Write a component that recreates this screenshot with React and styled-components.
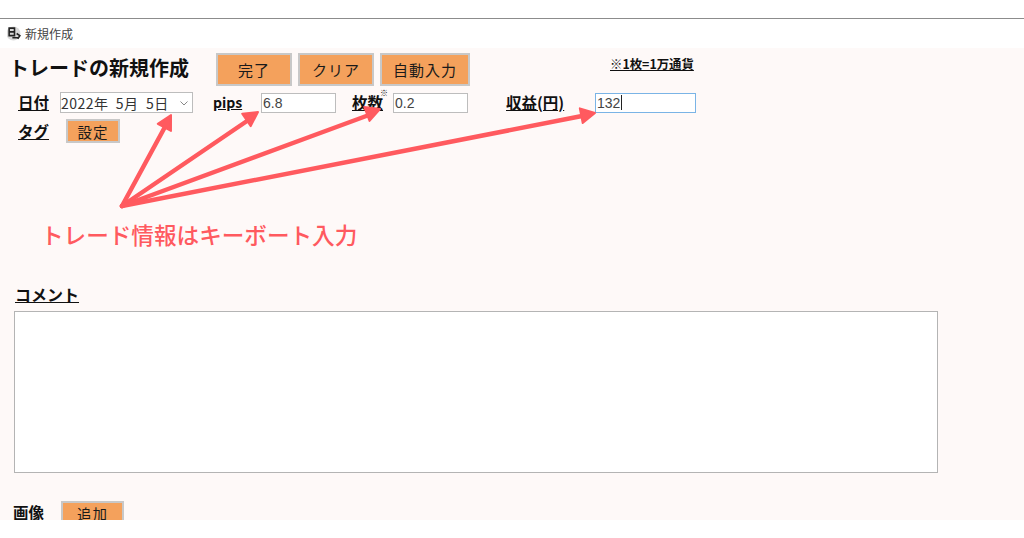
import React from "react";
import styled, { createGlobalStyle } from "styled-components";

const Global = createGlobalStyle`
  html, body { margin: 0; padding: 0; background: #fff; }
  body { font-family: "Noto Sans CJK JP", "Noto Sans", sans-serif; color: #111; }
`;
const Page = styled.div`
  position: relative;
  width: 1024px;
  height: 538px;
  overflow: hidden;
  padding-top: 18px;
  box-sizing: border-box;
`;
const TitleBar = styled.div`
  height: 30px;
  border-top: 1px solid #8c8c8c;
  box-sizing: border-box;
  display: flex;
  align-items: center;
  gap: 3px;
  padding: 0 0 0 7px;
  font-size: 12px;
  color: #444;
`;
const Panel = styled.div`
  height: 472px;
  overflow: hidden;
  background: #fef9f8;
  box-sizing: border-box;
  padding-top: 5px;
`;
const HeaderRow = styled.div`
  display: flex;
  align-items: center;
  height: 33px;
  padding-left: 9px;
`;
const Title = styled.h1`
  margin: -4px 0 0;
  width: 207px;
  font-size: 20px;
  font-weight: 700;
  line-height: 30px;
  white-space: nowrap;
`;
const OrangeButton = styled.button`
  width: ${(p) => p.$w}px;
  height: ${(p) => p.$h || 33}px;
  margin-right: ${(p) => p.$mr || 0}px;
  flex: none;
  padding: 0;
  border: 2px solid #c8c8c8;
  background: #f4a15c;
  color: #1a1a1a;
  font: 400 ${(p) => p.$fs || 15}px "Noto Sans CJK JP", sans-serif;
  letter-spacing: 1px;
`;
const Note = styled.span`
  margin-left: 140px;
  margin-top: -12px;
  font-size: 12.400px;
  font-weight: 700;
  text-decoration: underline;
  white-space: nowrap;
`;
const FieldRow = styled.div`
  display: flex;
  align-items: center;
  height: 21px;
  margin-top: 6px;
  padding-left: 18px;
`;
const Label = styled.span`
  position: relative;
  flex: none;
  width: ${(p) => p.$w}px;
  font-size: ${(p) => p.$fs || 15.500}px;
  font-weight: 700;
  line-height: 21px;
  white-space: nowrap;
  span { text-decoration: underline; }
`;
const Tiny = styled.sup`
  position: absolute;
  left: 28px;
  top: -3px;
  font-size: 8px;
  line-height: 8px;
  font-weight: 700;
`;
const DateBox = styled.div`
  flex: none;
  width: 133px;
  height: 21px;
  margin-right: 20px;
  border: 1px solid #bdbdbd;
  box-sizing: border-box;
  background: #fff;
  display: flex;
  align-items: center;
  justify-content: space-between;
  padding: 0 3px 0 0;
  font-size: 14px;
  letter-spacing: 0.500px;
  color: #333;
  white-space: pre;
`;
const TextBox = styled.div`
  flex: none;
  width: ${(p) => p.$w}px;
  height: 20px;
  box-sizing: border-box;
  margin-right: ${(p) => p.$mr || 0}px;
  border: 1px solid ${(p) => (p.$focus ? "#7ab4e6" : "#bdbdbd")};
  background: #fff;
  padding-left: 1px;
  font: 400 14px/18px "Liberation Sans", sans-serif;
  color: #444;
  display: flex;
  align-items: center;
`;
const Caret = styled.i`
  display: inline-block;
  width: 1px;
  height: 15px;
  margin-left: 1px;
  background: #222;
`;
const TagRow = styled.div`
  display: flex;
  align-items: center;
  height: 24px;
  margin-top: 6px;
  padding-left: 18px;
`;
const Hint = styled.p`
  margin: 76px 0 0 41px;
  height: 32px;
  font-size: 22.600px;
  line-height: 32px;
  font-weight: 500;
  color: #ff5a5f;
  white-space: nowrap;
`;
const CommentLabel = styled.div`
  margin: 32px 0 0 15px;
  font-size: 16px;
  font-weight: 700;
  line-height: 23px;
  text-decoration: underline;
`;
const CommentBox = styled.div`
  width: 924px;
  height: 162px;
  box-sizing: border-box;
  margin: 5px 0 0 14px;
  border: 1px solid #b4b4b4;
  background: #fff;
`;
const ImageRow = styled.div`
  display: flex;
  align-items: flex-start;
  margin-top: 28px;
  padding-left: 13px;
`;
const ImageLabel = styled(Label)`
  margin-top: 1px;
`;
const Arrows = styled.svg`
  position: absolute;
  inset: 0;
  pointer-events: none;
`;

const targets = [
  [122, 206, 166, 125, 171, 115],
  [122, 206, 247, 121, 258, 112],
  [122, 206, 369, 115, 380, 109],
  [122, 206, 582, 116, 595, 113],
];

function Head({ x, y, fromX, fromY }) {
  const a = Math.atan2(y - fromY, x - fromX);
  const d = 14;
  const w = 7.500;
  const bx = x - d * Math.cos(a);
  const by = y - d * Math.sin(a);
  const nx = -Math.sin(a) * w;
  const ny = Math.cos(a) * w;
  return <polygon points={`${x},${y} ${bx + nx},${by + ny} ${bx - nx},${by - ny}`} fill="#ff5a5f" stroke="#ff5a5f" strokeWidth="2" strokeLinejoin="round" />;
}

export default function App() {
  return (
    <Page>
      <Global />
      <TitleBar>
        <svg width="15" height="15" viewBox="0 0 14 14">
          <circle cx="6" cy="7" r="6.500" fill="#d9d9d9" />
          <path d="M2 2h5v7H2zM2 5.500h5M5 11h6M9 7l3 2-2 3" fill="none" stroke="#222" strokeWidth="1.500" />
        </svg>
        新規作成
      </TitleBar>
      <Panel>
        <HeaderRow>
          <Title>トレードの新規作成</Title>
          <OrangeButton $w={76} $mr={6}>完了</OrangeButton>
          <OrangeButton $w={76} $mr={6}>クリア</OrangeButton>
          <OrangeButton $w={90}>自動入力</OrangeButton>
          <Note>※1枚=1万通貨</Note>
        </HeaderRow>
        <FieldRow>
          <Label $w={42}><span>日付</span></Label>
          <DateBox>
            2022年  5月  5日
            <svg width="10" height="10" viewBox="0 0 10 10"><path d="M1.500 3.500 5 7l3.500-3.500" fill="none" stroke="#888" strokeWidth="1" /></svg>
          </DateBox>
          <Label $w={48} $fs={14}><span>pips</span></Label>
          <TextBox $w={75} $mr={16}>6.8</TextBox>
          <Label $w={41}><span>枚数</span><Tiny>※</Tiny></Label>
          <TextBox $w={75} $mr={38}>0.2</TextBox>
          <Label $w={89}><span>収益(円)</span></Label>
          <TextBox $w={101} $focus>132<Caret /></TextBox>
        </FieldRow>
        <TagRow>
          <Label $w={48}><span>タグ</span></Label>
          <OrangeButton $w={54} $h={24} $fs={14.500}>設定</OrangeButton>
        </TagRow>
        <Hint>トレード情報はキーボート入力</Hint>
        <CommentLabel>コメント</CommentLabel>
        <CommentBox />
        <ImageRow>
          <ImageLabel $w={48}><span>画像</span></ImageLabel>
          <OrangeButton $w={63} $h={24} $fs={14.500}>追加</OrangeButton>
        </ImageRow>
      </Panel>
      <Arrows width="1024" height="538" viewBox="0 0 1024 538">
        {targets.map(([x0, y0, x1, y1, x2, y2]) => (
          <g key={x2}>
            <line x1={x0} y1={y0} x2={x1} y2={y1} stroke="#ff5a5f" strokeWidth="4.500" strokeLinecap="round" />
            <Head x={x2} y={y2} fromX={x0} fromY={y0} />
          </g>
        ))}
      </Arrows>
    </Page>
  );
}
